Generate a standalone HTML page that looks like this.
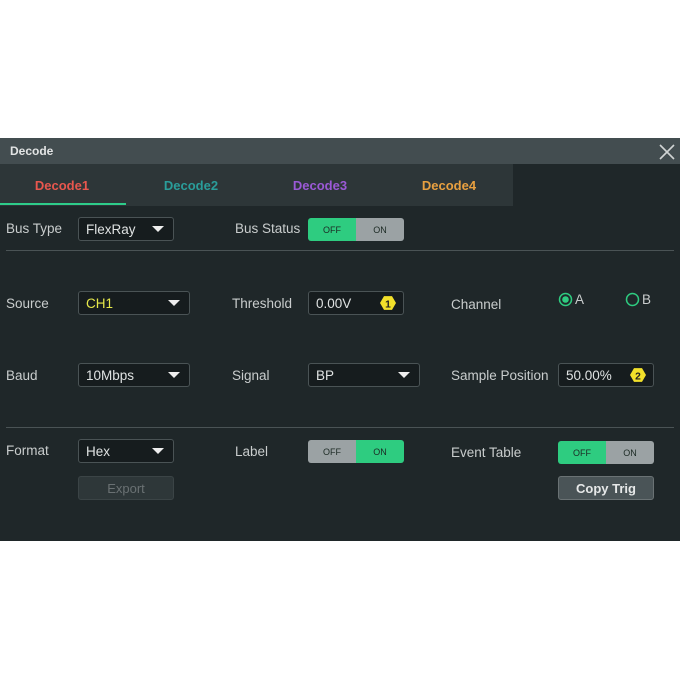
<!DOCTYPE html>
<html><head><style>
*{margin:0;padding:0;box-sizing:border-box}
body{width:680px;height:680px;background:#fff;position:relative;overflow:hidden;font-family:"Liberation Sans",sans-serif}
.a{position:absolute}
.lbl{position:absolute;color:#c9cdcd;font-size:13.5px;line-height:16px}
.dd{position:absolute;background:#161c1e;border:1px solid #4a5355;border-radius:3px;color:#dfe2e2;font-size:13.5px;padding-left:7px;display:flex;align-items:center}
.dd .tri{position:absolute;right:9px;top:50%;margin-top:-3px;width:0;height:0;border-left:6px solid transparent;border-right:6px solid transparent;border-top:6px solid #eee}
.tg{position:absolute;border-radius:3px;overflow:hidden;display:flex;font-size:9px;color:#1c2a24}
.tg div{flex:1;display:flex;align-items:center;justify-content:center}
.g{background:#2ecc80}.s{background:#9ba2a4}
.hex{position:absolute;right:7px;top:50%;margin-top:-8px;width:16px;height:16px}
</style></head><body>
<div class="a" style="left:0;top:138px;width:680px;height:403px;background:#1f2729"></div>
<div class="a" style="left:0;top:138px;width:680px;height:26px;background:#434d50"></div>
<div class="a" style="left:10px;top:144px;color:#e2e4e4;font-size:12px;font-weight:bold">Decode</div>
<svg class="a" style="left:659px;top:144px" width="16" height="16"><path d="M1 1L15 15M15 1L1 15" stroke="#d0d4d4" stroke-width="1.6"/></svg>
<div class="a" style="left:0;top:164px;width:513px;height:42px;background:#2d3638"></div>
<div class="a" style="left:0;top:203px;width:126px;height:2px;background:#2ecc8a"></div>
<div class="a" style="left:0;top:178px;width:124px;text-align:center;color:#e8574e;font-size:13px;font-weight:bold">Decode1</div>
<div class="a" style="left:129px;top:178px;width:124px;text-align:center;color:#2a9d9a;font-size:13px;font-weight:bold">Decode2</div>
<div class="a" style="left:258px;top:178px;width:124px;text-align:center;color:#9b59d6;font-size:13px;font-weight:bold">Decode3</div>
<div class="a" style="left:387px;top:178px;width:124px;text-align:center;color:#e8a040;font-size:13px;font-weight:bold">Decode4</div>

<div class="lbl" style="left:6px;top:221px">Bus Type</div>
<div class="dd" style="left:78px;top:217px;width:96px;height:24px">FlexRay<span class="tri"></span></div>
<div class="lbl" style="left:235px;top:221px">Bus Status</div>
<div class="tg" style="left:308px;top:218px;width:96px;height:23px"><div class="g">OFF</div><div class="s">ON</div></div>
<div class="a" style="left:6px;top:250px;width:668px;height:1px;background:#4a5355"></div>

<div class="lbl" style="left:6px;top:296px">Source</div>
<div class="dd" style="left:78px;top:291px;width:112px;height:24px;color:#e6e84a">CH1<span class="tri"></span></div>
<div class="lbl" style="left:232px;top:296px">Threshold</div>
<div class="dd" style="left:308px;top:291px;width:96px;height:24px">0.00V<svg class="hex" viewBox="0 0 14 14"><polygon points="3.5,1 10.5,1 14,7 10.5,13 3.5,13 0,7" fill="#f2e02a"/><text x="7" y="11" font-size="9" font-weight="bold" text-anchor="middle" fill="#222" font-family="Liberation Sans">1</text></svg></div>
<div class="lbl" style="left:451px;top:297px">Channel</div>
<svg class="a" style="left:558px;top:292px" width="15" height="15"><circle cx="7.5" cy="7.5" r="6" fill="none" stroke="#2ecc80" stroke-width="1.5"/><circle cx="7.5" cy="7.5" r="3.3" fill="#2ecc80"/></svg>
<div class="lbl" style="left:575px;top:292px">A</div>
<svg class="a" style="left:625px;top:292px" width="15" height="15"><circle cx="7.5" cy="7.5" r="6" fill="none" stroke="#2ecc80" stroke-width="1.5"/></svg>
<div class="lbl" style="left:642px;top:292px">B</div>

<div class="lbl" style="left:6px;top:368px">Baud</div>
<div class="dd" style="left:78px;top:363px;width:112px;height:24px">10Mbps<span class="tri"></span></div>
<div class="lbl" style="left:232px;top:368px">Signal</div>
<div class="dd" style="left:308px;top:363px;width:112px;height:24px">BP<span class="tri"></span></div>
<div class="lbl" style="left:451px;top:368px">Sample Position</div>
<div class="dd" style="left:558px;top:363px;width:96px;height:24px">50.00%<svg class="hex" viewBox="0 0 14 14"><polygon points="3.5,1 10.5,1 14,7 10.5,13 3.5,13 0,7" fill="#f2e02a"/><text x="7" y="11" font-size="9" font-weight="bold" text-anchor="middle" fill="#222" font-family="Liberation Sans">2</text></svg></div>
<div class="a" style="left:6px;top:427px;width:668px;height:1px;background:#4a5355"></div>

<div class="lbl" style="left:6px;top:443px">Format</div>
<div class="dd" style="left:78px;top:439px;width:96px;height:24px">Hex<span class="tri"></span></div>
<div class="lbl" style="left:235px;top:444px">Label</div>
<div class="tg" style="left:308px;top:440px;width:96px;height:23px"><div class="s">OFF</div><div class="g">ON</div></div>
<div class="lbl" style="left:451px;top:445px">Event Table</div>
<div class="tg" style="left:558px;top:441px;width:96px;height:23px"><div class="g">OFF</div><div class="s">ON</div></div>
<div class="a" style="left:78px;top:476px;width:96px;height:24px;background:#2e3739;border:1px solid #3b4446;border-radius:3px;color:#6a7173;font-size:13px;display:flex;align-items:center;justify-content:center">Export</div>
<div class="a" style="left:558px;top:476px;width:96px;height:24px;background:#4a5457;border:1px solid #6a7274;border-radius:3px;color:#e6e8e8;font-size:13px;font-weight:bold;display:flex;align-items:center;justify-content:center">Copy Trig</div>
</body></html>
